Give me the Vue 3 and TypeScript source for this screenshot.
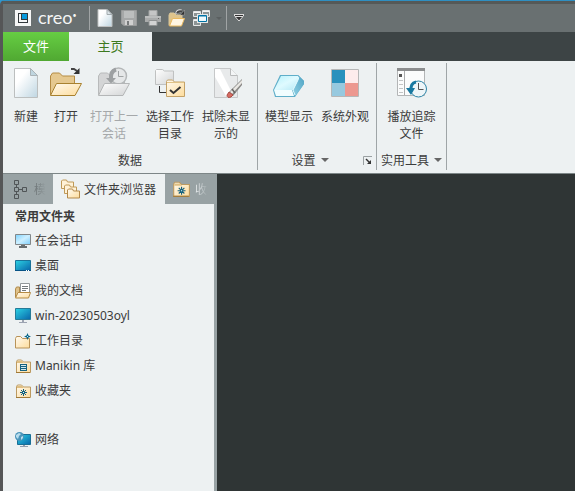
<script setup lang="ts">
interface RibbonItem {
  icon: string
  lines: string[]
  narrow?: boolean
  disabled?: boolean
}

interface RibbonGroup {
  name: string
  label: string
  items: RibbonItem[]
  menu?: boolean
  launcher?: boolean
}

interface FolderItem {
  icon: string
  label: string
}

const quickActions: { icon: string; title: string; disabled?: boolean }[] = [
  { icon: 'q-new', title: '新建' },
  { icon: 'q-save', title: '保存', disabled: true },
  { icon: 'q-print', title: '打印', disabled: true },
  { icon: 'q-open', title: '打开' },
  { icon: 'q-windows', title: '窗口' },
]

const groups: RibbonGroup[] = [
  {
    name: 'data',
    label: '数据',
    items: [
      { icon: 'r-new', lines: ['新建'], narrow: true },
      { icon: 'r-open', lines: ['打开'], narrow: true },
      { icon: 'r-last', lines: ['打开上一', '会话'], disabled: true },
      { icon: 'r-workdir', lines: ['选择工作', '目录'] },
      { icon: 'r-erase', lines: ['拭除未显', '示的'] },
    ],
  },
  {
    name: 'settings',
    label: '设置',
    menu: true,
    launcher: true,
    items: [
      { icon: 'r-model', lines: ['模型显示'] },
      { icon: 'r-colors', lines: ['系统外观'] },
    ],
  },
  {
    name: 'tools',
    label: '实用工具',
    menu: true,
    items: [{ icon: 'r-trail', lines: ['播放追踪', '文件'] }],
  },
]

const folders: FolderItem[] = [
  { icon: 'f-session', label: '在会话中' },
  { icon: 'f-desktop', label: '桌面' },
  { icon: 'f-docs', label: '我的文档' },
  { icon: 'f-computer', label: 'win-20230503oyl' },
  { icon: 'f-work', label: '工作目录' },
  { icon: 'f-library', label: 'Manikin 库' },
  { icon: 'f-favorite', label: '收藏夹' },
]
</script>

<template>
  <div class="window">
    <svg class="sprites" aria-hidden="true">
      <defs>
        <linearGradient id="paper" x1="0" y1="0" x2="1" y2="1">
          <stop offset="0.3" stop-color="#fff" />
          <stop offset="1" stop-color="#bfd6e2" />
        </linearGradient>
        <linearGradient id="cream" x1="0" y1="0" x2="1" y2="1">
          <stop offset="0" stop-color="#fffaf0" />
          <stop offset="1" stop-color="#fddc9c" />
        </linearGradient>
        <linearGradient id="grey" x1="0" y1="0" x2="1" y2="1">
          <stop offset="0" stop-color="#fff" />
          <stop offset="1" stop-color="#d2d4d5" />
        </linearGradient>
        <linearGradient id="screen" x1="0" y1="0" x2="1" y2="1">
          <stop offset="0" stop-color="#2cd3e4" />
          <stop offset="1" stop-color="#0865aa" />
        </linearGradient>
        <linearGradient id="ice" x1="0" y1="0" x2="1" y2="1">
          <stop offset="0" stop-color="#7cd3ff" />
          <stop offset="0.5" stop-color="#cdefff" />
          <stop offset="1" stop-color="#7ccdfb" />
        </linearGradient>
        <linearGradient id="glass" x1="0" y1="0" x2="1" y2="1">
          <stop offset="0" stop-color="#b5f1fb" />
          <stop offset="0.5" stop-color="#dffaff" />
          <stop offset="1" stop-color="#b4e8f5" />
        </linearGradient>
        <linearGradient id="glass-side" x1="1" y1="0" x2="0" y2="1">
          <stop offset="0" stop-color="#4fa3c3" />
          <stop offset="1" stop-color="#8fd0e4" />
        </linearGradient>
      </defs>

      <symbol id="q-new" viewBox="0 0 18 18">
        <path d="M2 .5h9l5 5v12H2z" fill="url(#paper)" stroke="#bfc1c1" />
        <path d="M11 .5v5h5z" fill="#dce4e8" stroke="#a3abae" />
      </symbol>
      <symbol id="q-save" viewBox="0 0 18 18">
        <path d="M1.500 1.500h15v15H4l-2.500-2z" fill="#a6a8a8" stroke="#999b9b" />
        <path d="M4 2h10v7H4z" fill="#bcbebe" />
        <path d="M5 11h8v5H5z" fill="#d0d0d0" />
        <path d="M7 12h2v4H7z" fill="#777a7b" />
      </symbol>
      <symbol id="q-print" viewBox="0 0 18 18">
        <path d="M5 1.500h8V7H5z" fill="#c5c6c6" stroke="#a3a5a5" />
        <path d="M1 7h16v6H1z" fill="#a9abab" />
        <path d="M1 7h16v2H1z" fill="#bbbdbd" />
        <path d="M5 11.500h8v5H5z" fill="#d2d3d3" stroke="#909393" />
        <path d="M14 9h1v1h-1z" fill="#666" />
      </symbol>
      <symbol id="q-open" viewBox="0 0 18 18">
        <path d="M1 16.500V6l1-2h4l2 2h6v4" fill="#dfc48b" stroke="#d9c69c" />
        <path d="M4.500 9.500h12l-3 7.500H1.500z" fill="#fff5e2" stroke="#e9b95f" />
        <path d="M8.500 5q1-4 5-3" fill="none" stroke="#ddd" stroke-width="3" />
        <path d="M9 4.500q1-3 5-2" fill="none" stroke="#444" stroke-width="2" />
        <path d="M16.500 1v5H12z" fill="#333" stroke="#aaa" stroke-width=".5" />
      </symbol>
      <symbol id="q-windows" viewBox="0 0 18 18">
        <path d="M1.500 2.500h7v5h-7zM10.500 1.500h7v6h-7zM1.500 10.500h7v6h-7z" fill="#8c9495" stroke="#e4e6e6" />
        <path d="M2 3.500h6M11 2.500h6M2 11.500h6" stroke="#f4f4f4" />
        <path d="M5 5h11v9H5z" fill="#e4e6e6" />
        <path d="M6.500 6.500h8v6h-8z" fill="#eef9fc" stroke="#0073a5" />
        <path d="M7 7h7" stroke="#0073a5" />
      </symbol>

      <symbol id="r-new" viewBox="0 0 32 32">
        <path d="M4.500 2.500h16l7 7v22h-23z" fill="url(#paper)" stroke="#bcbfbf" />
        <path d="M20.500 2.500v7h7z" fill="#bfd5df" stroke="#aab3b7" />
      </symbol>
      <symbol id="r-open" viewBox="0 0 32 32">
        <path d="M.5 29V10l2-3h7l3 3h12v7" fill="#e5c88f" stroke="#b48b43" />
        <path d="M6.500 17.500h25l-6.500 12H.5z" fill="url(#cream)" stroke="#a8812f" />
        <path d="M21 3h3l3 2" fill="none" stroke="#444" stroke-width="2" />
        <path d="M29.500 2v6h-6z" fill="#333" />
      </symbol>
      <symbol id="r-last" viewBox="0 0 32 32">
        <path d="M.5 29V10l2-3h7l3 3h14v7" fill="#d4d5d6" stroke="#b8babb" />
        <circle cx="20.500" cy="10" r="8" fill="#e5e7e8" stroke="#b4b7b8" stroke-width="1.500" />
        <path d="M20.500 5v5.500h5" fill="none" stroke="#a0a4a5" />
        <path d="M18 3.500q-6 2-5 10" fill="none" stroke="#9da0a2" stroke-width="4" />
        <path d="M8 12h10l-5 5.500z" fill="#9da0a2" />
        <path d="M6.500 17.500h25l-6.500 12H.5z" fill="url(#grey)" stroke="#b4b6b7" />
      </symbol>
      <symbol id="r-workdir" viewBox="0 0 32 32">
        <path d="M5.500 20v6.500h7" fill="none" stroke="#333" />
        <path d="M1.500 18.500v-14l1-1h6l2 1.500h9v13.500z" fill="url(#grey)" stroke="#bfc1c1" />
        <path d="M12.500 30.500v-15l1-1.500h5l2 2h10v14.500z" fill="url(#cream)" stroke="#c4a268" />
        <path d="M13 16.500h17" stroke="#e0c286" />
        <path d="M16 24l3.500 3 7-6" fill="none" stroke="#333" stroke-width="2" />
      </symbol>
      <symbol id="r-erase" viewBox="0 0 32 32">
        <path d="M4.500 2.500h16l7 7v22h-23z" fill="#e8eaeb" stroke="#c6c8c9" />
        <path d="M20.500 2.500v7h7" fill="#f3f5f6" stroke="#b8babb" />
        <path d="M5 3h5l11 22-2 5h-3L5 11z" fill="#fff" />
        <path d="M19 26L32 13v6l-9 11z" fill="#8a8987" />
        <path d="M20 26L32 14v3L22 28z" fill="#e9e7e3" />
        <path d="M22 23l3 4" stroke="#686563" stroke-width="1.500" />
        <path d="M19 26l4 3-2 2q-4 1.500-4-2z" fill="#d66c63" stroke="#a84c45" />
      </symbol>
      <symbol id="r-model" viewBox="0 0 32 32">
        <path d="M7 9h18l6 6v3l-9 13H2l-2-7z" fill="#5faec9" />
        <path d="M25 9l6 6v3l-9 12-2-7z" fill="url(#glass-side)" />
        <path d="M8 10h16q3 1 1 4l-5 10H1z" fill="url(#glass)" />
        <path d="M24 10q3 1 1 4l-5 10 2 5" fill="none" stroke="#e4fbff" />
        <path d="M1 24h18l2 6H3z" fill="#f1fdff" />
      </symbol>
      <symbol id="r-colors" viewBox="0 0 32 32">
        <path d="M2.500 3.500h27v27h-27z" fill="#fff" stroke="#b6b7b7" />
        <path d="M3 4h13v13H3z" fill="#2a91bd" />
        <path d="M16 4h13v13H16z" fill="#fdecec" />
        <path d="M3 17h13v13H3z" fill="#97c9df" />
        <path d="M16 17h13v13H16z" fill="#ec9890" />
      </symbol>
      <symbol id="r-trail" viewBox="0 0 32 32">
        <path d="M1.500 3.500h27v26h-27z" fill="#fbfcfc" stroke="#b3b5b6" />
        <path d="M1 2h28v3H1z" fill="#8b8d8e" />
        <path d="M8.500 5v24" stroke="#a9abac" />
        <path d="M3 8h3v3H3z" fill="#555" />
        <path d="M3 14.500h4M3 18.500h4M3 22.500h4M3 26.500h4" stroke="#c2c4c5" />
        <circle cx="22.500" cy="23" r="8" fill="#eef5f8" stroke="#2b84a7" />
        <path d="M22.500 17v6.500h5" fill="none" stroke="#555" />
        <path d="M20 16q-6 1-5 10" fill="none" stroke="#1878a0" stroke-width="3" />
        <path d="M10 22h9l-4 7z" fill="#1878a0" />
      </symbol>

      <symbol id="f-session" viewBox="0 0 16 16">
        <path d="M.5 1.500h15v10H.5z" fill="url(#ice)" stroke="#828789" />
        <path d="M6 12h4v1H6zM4 13h8v2H4z" fill="#686d70" />
      </symbol>
      <symbol id="f-desktop" viewBox="0 0 16 16">
        <path d="M.5 2.500h15v10H.5z" fill="url(#screen)" stroke="#1a7298" />
        <path d="M0 12h16v1H0z" fill="#075386" />
        <path d="M11 12h1v1h-1zM13 12h1v1h-1z" fill="#fff" />
      </symbol>
      <symbol id="f-docs" viewBox="0 0 16 16">
        <path d="M.5 14V6l1-2h3v7" fill="#dfc28a" stroke="#b18b4c" />
        <path d="M5.500 .5h9v11h-9z" fill="#fff" stroke="#92989b" />
        <path d="M7 3.500h6M7 5.500h6M7 7.500h4" stroke="#747a7d" />
        <path d="M3 9.500h12.500l-2 5.500H.5z" fill="url(#cream)" stroke="#b58b45" />
      </symbol>
      <symbol id="f-computer" viewBox="0 0 16 16">
        <path d="M.5 .5h15v11H.5z" fill="url(#screen)" stroke="#267b98" />
        <path d="M7 12h2v2H7zM4 14h8v1H4z" fill="#9da4b2" />
      </symbol>
      <symbol id="f-folder" viewBox="0 0 16 16">
        <path d="M1.500 14.500v-11l1-1.500h4l2 2h7v10.500z" fill="url(#cream)" stroke="#bc9a61" />
        <path d="M2 3h5l2 2H2z" fill="#dfbf82" />
        <path d="M1 14.500h14" stroke="#a17a38" />
      </symbol>
      <symbol id="f-work" viewBox="0 0 16 16">
        <path d="M.5 15V5.500l1-2h4l2 2h7V15z" fill="url(#cream)" stroke="#b89358" />
        <path d="M12.500 0l1 2.500 2.500 1-2.500 1-1 2.500-1-2.500-2.500-1 2.500-1z" fill="#0c6688" />
        <path d="M12 3h1v1h-1z" fill="#bff0ff" />
      </symbol>
      <symbol id="f-library" viewBox="0 0 16 16">
        <use href="#f-folder" width="16" height="16" />
        <path d="M5 6h7v7H5z" fill="#16627f" />
        <path d="M6 7.500h5M6 9.500h5M6 11.500h5" stroke="#d5e9ed" />
      </symbol>
      <symbol id="f-favorite" viewBox="0 0 16 16">
        <use href="#f-folder" width="16" height="16" />
        <path d="M8.500 6v7M5 9.500h7M6 7l5 5M11 7l-5 5" stroke="#15617e" />
        <path d="M8 9h1v1H8z" fill="#dff" />
      </symbol>
      <symbol id="f-network" viewBox="0 0 16 16">
        <path d="M2.500 2.500h13v10h-13z" fill="url(#screen)" stroke="#196f96" />
        <path d="M8 13h2v1H8zM5 14h8v1H5z" fill="#919eae" />
        <circle cx="4.500" cy="4.500" r="4.500" fill="#4b94ba" />
        <path d="M1 3l3-2 2 1-2 2-1 3-2-2zM6 5l2-1v2L6 8z" fill="#b8dded" />
      </symbol>

      <symbol id="t-tree" viewBox="0 0 16 20">
        <path d="M2.500 5v3M2.500 12v3M5 10.500h4" stroke="#505557" />
        <path d="M.5 1.500h4v4h-4zM.5 8.500h4v4h-4zM.5 15.500h4v4h-4zM8.500 8.500h4v4h-4z" fill="none" stroke="#505557" />
      </symbol>
      <symbol id="t-folders" viewBox="0 0 20 20">
        <path d="M.5 9.500V2l1-1h4l1 2h6v6.500z" fill="#fff2d7" stroke="#c09a58" />
        <path d="M3.500 14.500V7l1-1h4l1 2h6v6.500z" fill="#fff2d7" stroke="#c09a58" />
        <path d="M6.500 19v-8l1-1h4l1 2h6v7z" fill="url(#cream)" stroke="#b4894a" />
      </symbol>
    </svg>

    <header class="title-bar">
      <div class="brand">
        <svg class="brand-mark" viewBox="0 0 16 16" aria-hidden="true">
          <path d="M0 0h16v16H0z" fill="#f5f6f6" />
          <path d="M3 3h10v10H3z" fill="#333a3d" />
          <path d="M4 4h2v6h6v2H4z" fill="#f5f6f6" />
          <path d="M7 4h5v5H7z" fill="#079ade" />
        </svg>
        <span class="brand-name">creo<sup>•</sup></span>
      </div>
      <nav class="quick-bar" aria-label="快速访问">
        <button
          v-for="action in quickActions"
          :key="action.icon"
          type="button"
          class="quick-button"
          :aria-label="action.title"
          :disabled="action.disabled"
        >
          <svg width="18" height="18" aria-hidden="true"><use :href="`#${action.icon}`" /></svg>
        </button>
        <span class="faded-arrow"></span>
      </nav>
      <button type="button" class="customize" aria-label="自定义">
        <svg width="10" height="8" viewBox="0 0 10 8" aria-hidden="true">
          <path d="M0 0h10v2H0z" fill="#ddd" />
          <path d="M1 1h8v1H1z" fill="#333" />
          <path d="M1 2.500h8L5 7z" fill="#333" stroke="#ddd" />
        </svg>
      </button>
    </header>

    <nav class="ribbon-tabs">
      <button type="button" class="file-tab">文件</button>
      <button type="button" class="home-tab">主页</button>
    </nav>

    <section class="ribbon">
      <section v-for="group in groups" :key="group.name" class="group" :class="group.name">
        <div class="group-items">
          <button
            v-for="item in group.items"
            :key="item.icon"
            type="button"
            class="command"
            :class="{ narrow: item.narrow }"
            :disabled="item.disabled"
          >
            <svg width="32" height="32" aria-hidden="true"><use :href="`#${item.icon}`" /></svg>
            <span v-for="line in item.lines" :key="line">{{ line }}</span>
          </button>
        </div>
        <footer class="group-footer">
          <button v-if="group.menu" type="button" class="group-menu">
            {{ group.label }}<span class="caret"></span>
          </button>
          <span v-else>{{ group.label }}</span>
          <button v-if="group.launcher" type="button" class="launcher" aria-label="更多设置">
            <svg width="9" height="9" viewBox="0 0 9 9" aria-hidden="true">
              <path d="M.5 9V.5H9" fill="none" stroke="#9aa0a2" />
              <path d="M3 3l4 4" stroke="#333" stroke-width="1.500" />
              <path d="M8 4v4H4z" fill="#333" />
            </svg>
          </button>
        </footer>
      </section>
    </section>

    <main class="workspace">
      <aside class="navigator">
        <nav class="panel-tabs">
          <button type="button" class="panel-tab tree-tab">
            <svg width="16" height="20" aria-hidden="true"><use href="#t-tree" /></svg>
            <span class="fading">模</span>
          </button>
          <button type="button" class="panel-tab active">
            <svg width="20" height="20" aria-hidden="true"><use href="#t-folders" /></svg>
            <span>文件夹浏览器</span>
          </button>
          <button type="button" class="panel-tab favorites-tab">
            <svg width="18" height="18" aria-hidden="true"><use href="#f-favorite" /></svg>
            <span class="fading light">收</span>
          </button>
        </nav>
        <div class="folder-panel">
          <h2>常用文件夹</h2>
          <ul>
            <li v-for="folder in folders" :key="folder.icon">
              <a href="#">
                <svg width="16" height="16" aria-hidden="true"><use :href="`#${folder.icon}`" /></svg>
                {{ folder.label }}
              </a>
            </li>
            <li class="network">
              <a href="#">
                <svg width="16" height="16" aria-hidden="true"><use href="#f-network" /></svg>
                网络
              </a>
            </li>
          </ul>
        </div>
      </aside>
      <section class="canvas" aria-label="图形区"></section>
    </main>
  </div>
</template>

<style>
body {
  margin: 0;
  background: #2f97cf;
}
</style>

<style scoped>
.window {
  box-sizing: border-box;
  display: flex;
  flex-direction: column;
  min-height: 100vh;
  border-top: 1px solid #2f8fc2;
  border-left: 3px solid #555657;
  border-top-left-radius: 5px;
  background: #555657;
  color: #3c3c3c;
  font-family: "Noto Sans", "Noto Sans CJK SC", sans-serif;
  font-size: 12px;
  line-height: 17px;
}

.sprites {
  position: absolute;
  width: 0;
  height: 0;
}

svg {
  display: block;
  flex: none;
}

button {
  margin: 0;
  padding: 0;
  border: 0;
  background: none;
  color: inherit;
  font: inherit;
}

.title-bar {
  display: flex;
  align-items: center;
  height: 28px;
  border-top: 3px solid #555958;
  background: #697071;
}

.brand {
  display: flex;
  align-items: center;
  gap: 7px;
  width: 86px;
  padding-left: 12px;
  box-sizing: border-box;
  color: #f4f5f5;
}

.brand-mark {
  width: 16px;
  height: 16px;
}

.brand-name {
  display: flex;
  height: 20px;
  font-family: Lato, sans-serif;
  font-size: 18px;
  line-height: 18px;
}

.brand-name sup {
  font-size: 7px;
  line-height: 14px;
}

.quick-bar {
  display: flex;
  align-items: center;
  gap: 6px;
  height: 24px;
  padding-left: 6px;
  border-left: 1px solid #a0a4a5;
}

.quick-button {
  width: 18px;
  height: 18px;
}

.faded-arrow {
  margin-right: 4px;
  border: 3px solid transparent;
  border-top-color: #5a5f60;
  border-bottom: 0;
}

.customize {
  height: 24px;
  padding: 0 7px;
  border-left: 1px solid #a0a4a5;
}

.ribbon-tabs {
  display: flex;
  height: 29px;
  background: #3d4445;
  font-size: 13px;
}

.file-tab {
  width: 66px;
  background: linear-gradient(#66ce43, #50a832);
  color: #fff;
}

.home-tab {
  width: 83px;
  background: #edf1f2;
  color: #3d7920;
}

.ribbon {
  display: flex;
  height: 112px;
  border-bottom: 1px solid #7d8687;
  background: #edf1f2;
}

.group {
  display: flex;
  flex-direction: column;
  justify-content: space-between;
  margin: 2px 0 3px;
  padding: 3px 3px 0;
  border-right: 1px solid #9fa5a7;
}

.tools {
  padding: 3px 4px 0;
}

.group-items {
  display: flex;
  justify-content: center;
}

.command {
  display: flex;
  flex-direction: column;
  align-items: center;
  width: 56px;
  white-space: nowrap;
}

.command svg {
  margin-bottom: 10px;
}

.narrow {
  width: 40px;
}

.command:disabled {
  color: #a5a8aa;
}

.group-footer {
  position: relative;
  display: flex;
  align-items: center;
  justify-content: center;
  height: 20px;
}

.group-menu {
  display: flex;
  align-items: center;
  gap: 5px;
  white-space: nowrap;
}

.settings .group-menu {
  padding-right: 14px;
}

.caret {
  border: 4px solid transparent;
  border-top-color: #666;
  border-bottom: 0;
}

.launcher {
  position: absolute;
  right: 1px;
  bottom: 5px;
}

.workspace {
  display: flex;
  flex: 1;
}

.navigator {
  display: flex;
  flex-direction: column;
  width: 214px;
  background: #98a2a4;
}

.panel-tabs {
  display: flex;
  height: 30px;
}

.panel-tab {
  display: flex;
  align-items: center;
  white-space: nowrap;
}

.tree-tab {
  box-sizing: border-box;
  gap: 4px;
  width: 50px;
  padding-left: 11px;
}

.active {
  box-sizing: border-box;
  gap: 3px;
  width: 112px;
  padding-left: 8px;
  background: #edf1f2;
}

.favorites-tab {
  gap: 5px;
  padding-left: 7px;
}

.fading {
  background: linear-gradient(90deg, #6a7173, #98a2a4);
  background-clip: text;
  color: transparent;
}

.fading.light {
  background: linear-gradient(90deg, #edf1f2, #a0a9ab);
  background-clip: text;
}

.folder-panel {
  flex: 1;
  margin-right: 3px;
  padding-left: 12px;
  background: #edf1f2;
}

h2 {
  margin: 0;
  padding-top: 2px;
  font-size: 12px;
  font-weight: 700;
  line-height: 22px;
}

ul {
  margin: 0;
  padding: 0;
  list-style: none;
}

.folder-panel a {
  display: flex;
  align-items: center;
  gap: 4px;
  height: 25px;
  color: inherit;
  text-decoration: none;
}

.network {
  padding-top: 24px;
}

.canvas {
  flex: 1;
  background: #2f3535;
}
</style>
